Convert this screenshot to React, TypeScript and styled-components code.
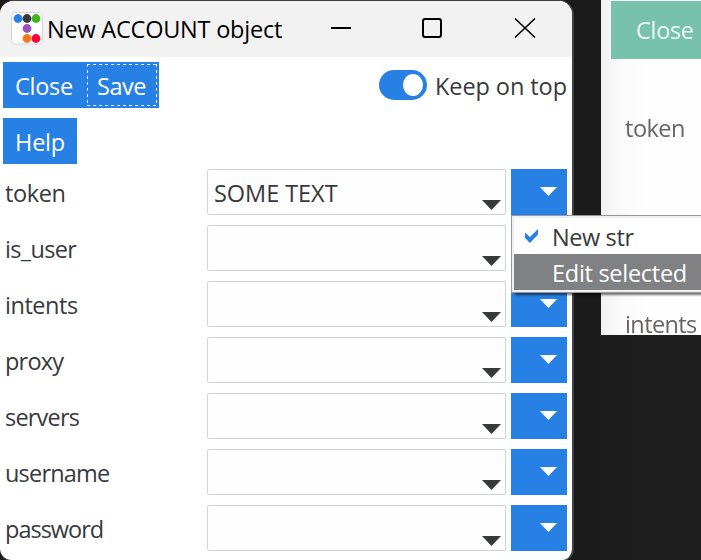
import React from "react";
import styled, { createGlobalStyle } from "styled-components";

const BLUE = "#2780e3";
const INK = "#373a3c";

const GlobalStyle = createGlobalStyle`
  * { box-sizing: border-box; }
  body {
    margin: 0;
    overflow: hidden;
    font-family: "Open Sans", "Noto Sans", sans-serif;
    font-size: 23.5px;
    line-height: 32px;
    color: ${INK};
  }
`;

const Desktop = styled.div`
  position: relative;
  width: 701px;
  height: 560px;
  overflow: hidden;
  background: linear-gradient(to right, #1a1a1a 574px, #1e1e1e 640px);
`;

const Text = styled.span<{ $track?: number }>`
  display: block;
  white-space: pre;
  letter-spacing: ${(p) => p.$track ?? 0}px;
`;

const BackWindow = styled.section`
  position: absolute;
  left: 601px;
  top: 0;
  width: 100px;
  height: 335px;
  background: linear-gradient(to right, #f1f1f1, #fafafa 20px, #fefefe 45px);
  color: #6b6263;
  padding: 1px 0 0 10px;
`;

const GreenButton = styled.div`
  height: 58px;
  padding: 13px 0 0 25px;
  background: #78c2ad;
  color: #f0faf6;

  span { filter: blur(0.5px); }
`;

const BackLabel = styled.div<{ $top: number }>`
  height: 32px;
  margin-top: ${(p) => p.$top}px;
  padding-left: 14px;
  filter: blur(0.5px);
`;

const Window = styled.main`
  position: absolute;
  left: 0;
  top: 0;
  width: 574px;
  height: 561px;
  overflow: hidden;
  border: solid #414141;
  border-width: 1px 2px 1px 0;
  border-radius: 14px 15px 12px 12px;
  background: #fff;
`;

const TitleBar = styled.header`
  display: flex;
  height: 56px;
  padding-left: 11px;
  background: #f2f2f2;
  color: #000;
`;

const AppIcon = styled.svg`
  flex: none;
  margin-top: 11px;
`;

const Title = styled.h1`
  width: 276px;
  margin: 12px 0 0 4px;
  font: inherit;
`;

const WindowControls = styled.svg`
  flex: none;
  margin: 15px 0 0 8px;
`;

const Toolbar = styled.div<{ $gap: number }>`
  display: flex;
  height: 46px;
  margin: ${(p) => p.$gap}px 0 0 3px;
`;

const Button = styled.button<{ $width: number; $indent?: number }>`
  position: relative;
  width: ${(p) => p.$width}px;
  height: 46px;
  border: 0;
  padding: 2px 0 0 ${(p) => p.$indent ?? 12}px;
  background: ${BLUE};
  color: #fff;
  font: inherit;
  text-align: left;
`;

const FocusRing = styled.span`
  position: absolute;
  inset: 2px 2px 2px 0;
  --dash: #fff 0 3px, transparent 3px 6px;
  background:
    repeating-linear-gradient(90deg, var(--dash)) 0 0 / 100% 1px no-repeat,
    repeating-linear-gradient(90deg, var(--dash)) 0 100% / 100% 1px no-repeat,
    repeating-linear-gradient(180deg, var(--dash)) 0 0 / 1px 100% no-repeat,
    repeating-linear-gradient(180deg, var(--dash)) 100% 0 / 1px 100% no-repeat;
`;

const ToggleLabel = styled.label`
  display: flex;
  margin-left: 220px;
  gap: 8px;
  padding-top: 8px;
`;

const Switch = styled.span`
  display: flex;
  justify-content: flex-end;
  align-items: center;
  width: 48px;
  height: 30px;
  padding-right: 4px;
  border-radius: 15px;
  background: ${BLUE};
`;

const Knob = styled.span`
  width: 20px;
  height: 22px;
  border-radius: 50%;
  background: #fff;
`;

const Fields = styled.div`
  display: grid;
  row-gap: 10px;
  margin-top: 5px;
`;

const Row = styled.div`
  display: grid;
  grid-template-columns: 201px 299px 56px;
  column-gap: 5px;
  height: 46px;
  padding-left: 1px;
`;

const Label = styled.div`
  padding: 8px 0 0 4px;
`;

const Combo = styled.div`
  display: flex;
  justify-content: space-between;
  border: 1px solid #ced4da;
  border-radius: 2px;
  background: #fdfdfd;
  padding: 7px 4px 0 6px;
`;

const MenuButton = styled.button`
  display: flex;
  justify-content: flex-end;
  padding: 18px 10px 0 0;
  border: 0;
  background: ${BLUE};
`;

const ComboArrow = styled.svg`
  flex: none;
  margin-top: 23px;
`;

const Menu = styled.div`
  position: absolute;
  left: 511px;
  top: 215px;
  width: 230px;
  height: 78px;
  padding: 2px;
  border: 1px solid #989898;
  background: #f0f0f0;
  box-shadow: 4px 2px 2px rgba(0, 0, 0, 0.55);
`;

const MenuItem = styled.div<{ $active?: boolean }>`
  display: grid;
  grid-template-columns: 38px 1fr;
  height: 36px;
  padding-top: 3px;
  background: ${(p) => (p.$active ? "#7f8182" : "#fff")};
  color: ${(p) => (p.$active ? "#fff" : INK)};
`;

const Check = styled.svg`
  margin: 8px 0 0 11px;
`;

const dots: [number, number, string][] = [
  [7, 7, "#2780e3"],
  [16, 7, "#373a3c"],
  [25, 7, "#3fb618"],
  [16, 17, "#9954bb"],
  [16, 27, "#ff7518"],
  [25, 27, "#ff0039"],
];

const fields = [
  { name: "token", track: -0.4, value: "SOME TEXT" },
  { name: "is_user", track: -0.65 },
  { name: "intents", track: -0.45 },
  { name: "proxy", track: -0.8 },
  { name: "servers", track: -0.8 },
  { name: "username", track: -0.8 },
  { name: "password", track: -1 },
];

export default function App() {
  return (
    <>
      <GlobalStyle />
      <Desktop>
        <BackWindow>
          <GreenButton><Text $track={-0.3}>Close</Text></GreenButton>
          <BackLabel $top={53}><Text $track={-0.5}>token</Text></BackLabel>
          <BackLabel $top={164}><Text $track={-0.6}>intents</Text></BackLabel>
        </BackWindow>
        <Window>
          <TitleBar>
            <AppIcon width="32" height="33">
              <rect x="0.5" y="0.5" width="31" height="31.5" rx="3.5" fill="#fff" stroke="#d4d4d4" />
              {dots.map(([x, y, c]) => (
                <circle key={`${x}-${y}`} cx={x} cy={y - 0.5} r="4.4" fill={c} />
              ))}
            </AppIcon>
            <Title><Text $track={-0.22}>New ACCOUNT object</Text></Title>
            <WindowControls width="210" height="26" fill="none" stroke="#000" strokeWidth="2">
              <path d="M0 12H20" />
              <rect x="92" y="3" width="18" height="18" rx="2" />
              <path d="M184 2.5L204 21.5M204 2.5L184 21.5" strokeWidth="1.6" />
            </WindowControls>
          </TitleBar>
          <Toolbar $gap={5}>
            <Button $width={84}><Text $track={-0.25}>Close</Text></Button>
            <Button $width={72} $indent={10}>
              <Text $track={-0.5}>Save</Text>
              <FocusRing />
            </Button>
            <ToggleLabel>
              <Switch><Knob /></Switch>
              <Text $track={-0.08}>Keep on top</Text>
            </ToggleLabel>
          </Toolbar>
          <Toolbar $gap={10}>
            <Button $width={74}><Text $track={-0.2}>Help</Text></Button>
          </Toolbar>
          <Fields>
            {fields.map((f) => (
              <Row key={f.name}>
                <Label><Text $track={f.track}>{f.name}</Text></Label>
                <Combo>
                  <Text $track={-0.05}>{f.value ?? ""}</Text>
                  <ComboArrow width="19" height="10"><path d="M0 0H19L9.5 10Z" fill={INK} /></ComboArrow>
                </Combo>
                <MenuButton>
                  <svg width="17" height="9"><path d="M0 0H17L8.5 9Z" fill="#fff" /></svg>
                </MenuButton>
              </Row>
            ))}
          </Fields>
        </Window>
        <Menu>
          <MenuItem>
            <Check width="14" height="14"><path d="M0 3.5L5 8L13 0V5.5L5 14L0 9Z" fill={BLUE} /></Check>
            <Text $track={-0.4}>New str</Text>
          </MenuItem>
          <MenuItem $active>
            <span />
            <Text $track={-0.28}>Edit selected</Text>
          </MenuItem>
        </Menu>
      </Desktop>
    </>
  );
}
